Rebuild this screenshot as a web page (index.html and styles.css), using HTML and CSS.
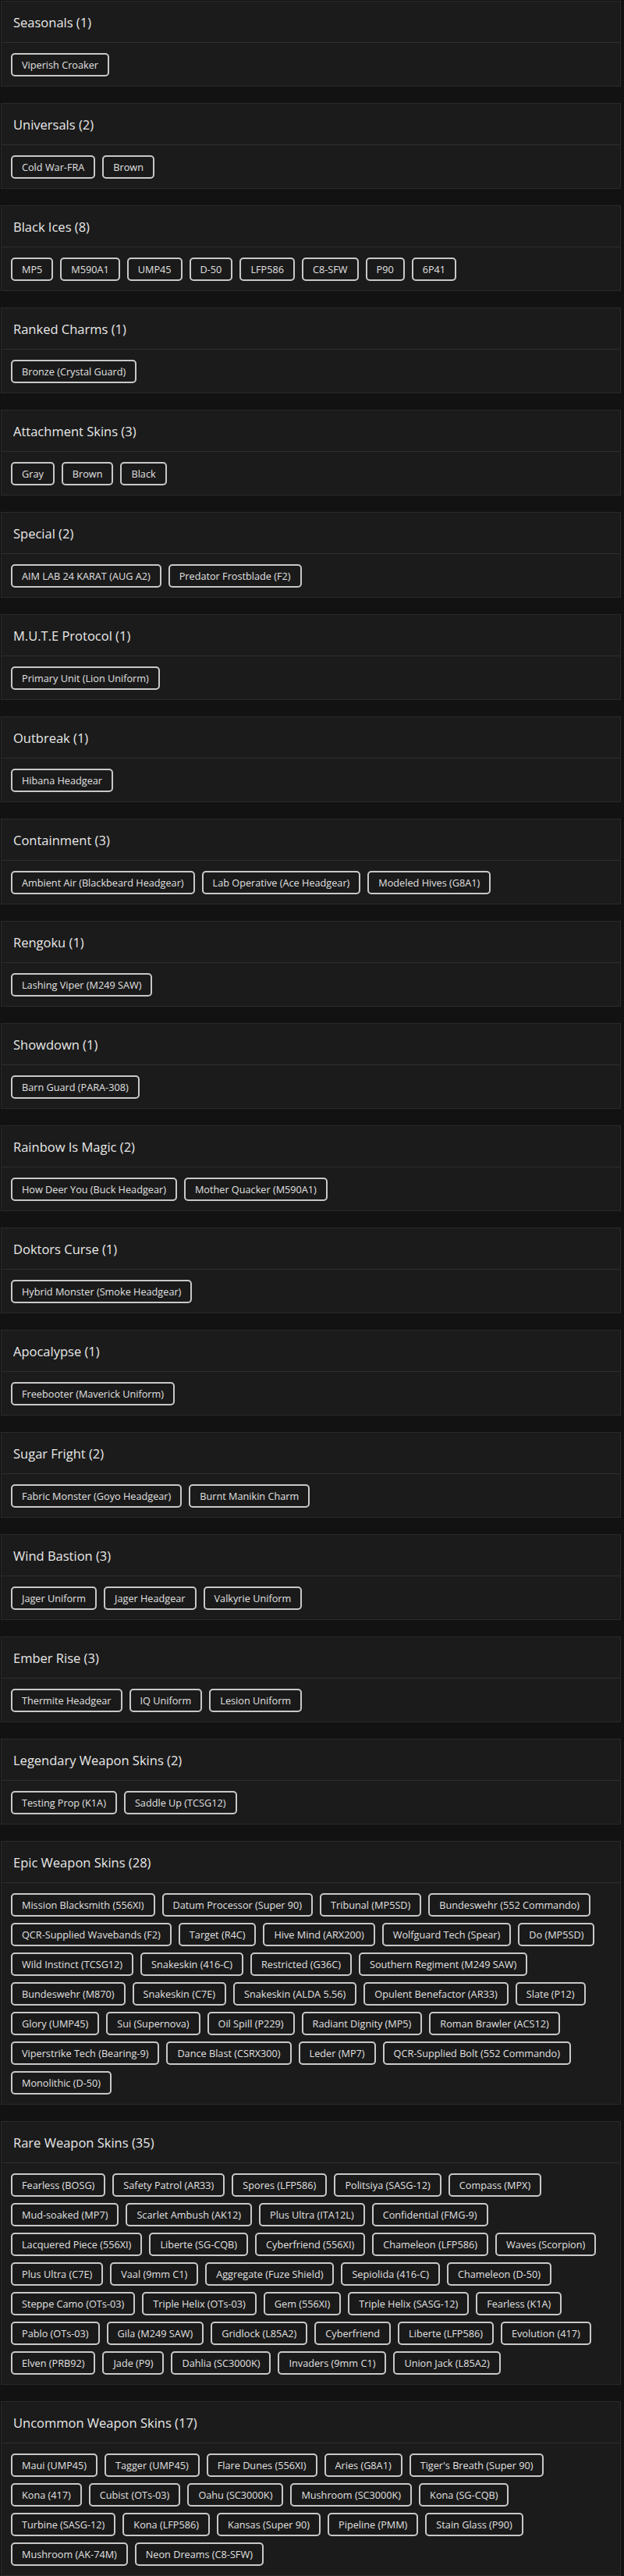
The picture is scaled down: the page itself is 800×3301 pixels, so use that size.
FILE: index.html
```html
<!DOCTYPE html>
<html lang="en">
<head>
<meta charset="utf-8">
<title>Collection</title>
<link rel="stylesheet" href="styles.css">
</head>
<body>
<main class="page">
  <section class="card"><h2 class="card-title">Seasonals (1)</h2><div class="chips">
    <span class="chip">Viperish Croaker</span>
  </div></section>
  <section class="card"><h2 class="card-title">Universals (2)</h2><div class="chips">
    <span class="chip">Cold War-FRA</span><span class="chip">Brown</span>
  </div></section>
  <section class="card"><h2 class="card-title">Black Ices (8)</h2><div class="chips">
    <span class="chip">MP5</span><span class="chip">M590A1</span><span class="chip">UMP45</span><span class="chip">D-50</span><span class="chip">LFP586</span><span class="chip">C8-SFW</span><span class="chip">P90</span><span class="chip">6P41</span>
  </div></section>
  <section class="card"><h2 class="card-title">Ranked Charms (1)</h2><div class="chips">
    <span class="chip">Bronze (Crystal Guard)</span>
  </div></section>
  <section class="card"><h2 class="card-title">Attachment Skins (3)</h2><div class="chips">
    <span class="chip">Gray</span><span class="chip">Brown</span><span class="chip">Black</span>
  </div></section>
  <section class="card"><h2 class="card-title">Special (2)</h2><div class="chips">
    <span class="chip">AIM LAB 24 KARAT (AUG A2)</span><span class="chip">Predator Frostblade (F2)</span>
  </div></section>
  <section class="card"><h2 class="card-title">M.U.T.E Protocol (1)</h2><div class="chips">
    <span class="chip">Primary Unit (Lion Uniform)</span>
  </div></section>
  <section class="card"><h2 class="card-title">Outbreak (1)</h2><div class="chips">
    <span class="chip">Hibana Headgear</span>
  </div></section>
  <section class="card"><h2 class="card-title">Containment (3)</h2><div class="chips">
    <span class="chip">Ambient Air (Blackbeard Headgear)</span><span class="chip">Lab Operative (Ace Headgear)</span><span class="chip">Modeled Hives (G8A1)</span>
  </div></section>
  <section class="card"><h2 class="card-title">Rengoku (1)</h2><div class="chips">
    <span class="chip">Lashing Viper (M249 SAW)</span>
  </div></section>
  <section class="card"><h2 class="card-title">Showdown (1)</h2><div class="chips">
    <span class="chip">Barn Guard (PARA-308)</span>
  </div></section>
  <section class="card"><h2 class="card-title">Rainbow Is Magic (2)</h2><div class="chips">
    <span class="chip">How Deer You (Buck Headgear)</span><span class="chip">Mother Quacker (M590A1)</span>
  </div></section>
  <section class="card"><h2 class="card-title">Doktors Curse (1)</h2><div class="chips">
    <span class="chip">Hybrid Monster (Smoke Headgear)</span>
  </div></section>
  <section class="card"><h2 class="card-title">Apocalypse (1)</h2><div class="chips">
    <span class="chip">Freebooter (Maverick Uniform)</span>
  </div></section>
  <section class="card"><h2 class="card-title">Sugar Fright (2)</h2><div class="chips">
    <span class="chip">Fabric Monster (Goyo Headgear)</span><span class="chip">Burnt Manikin Charm</span>
  </div></section>
  <section class="card"><h2 class="card-title">Wind Bastion (3)</h2><div class="chips">
    <span class="chip">Jager Uniform</span><span class="chip">Jager Headgear</span><span class="chip">Valkyrie Uniform</span>
  </div></section>
  <section class="card"><h2 class="card-title">Ember Rise (3)</h2><div class="chips">
    <span class="chip">Thermite Headgear</span><span class="chip">IQ Uniform</span><span class="chip">Lesion Uniform</span>
  </div></section>
  <section class="card"><h2 class="card-title">Legendary Weapon Skins (2)</h2><div class="chips">
    <span class="chip">Testing Prop (K1A)</span><span class="chip">Saddle Up (TCSG12)</span>
  </div></section>
  <section class="card"><h2 class="card-title">Epic Weapon Skins (28)</h2><div class="chips">
    <span class="chip">Mission Blacksmith (556XI)</span><span class="chip">Datum Processor (Super 90)</span><span class="chip">Tribunal (MP5SD)</span><span class="chip">Bundeswehr (552 Commando)</span>
    <span class="chip">QCR-Supplied Wavebands (F2)</span><span class="chip">Target (R4C)</span><span class="chip">Hive Mind (ARX200)</span><span class="chip">Wolfguard Tech (Spear)</span><span class="chip">Do (MP5SD)</span>
    <span class="chip">Wild Instinct (TCSG12)</span><span class="chip">Snakeskin (416-C)</span><span class="chip">Restricted (G36C)</span><span class="chip">Southern Regiment (M249 SAW)</span>
    <span class="chip">Bundeswehr (M870)</span><span class="chip">Snakeskin (C7E)</span><span class="chip">Snakeskin (ALDA 5.56)</span><span class="chip">Opulent Benefactor (AR33)</span><span class="chip">Slate (P12)</span>
    <span class="chip">Glory (UMP45)</span><span class="chip">Sui (Supernova)</span><span class="chip">Oil Spill (P229)</span><span class="chip">Radiant Dignity (MP5)</span><span class="chip">Roman Brawler (ACS12)</span>
    <span class="chip">Viperstrike Tech (Bearing-9)</span><span class="chip">Dance Blast (CSRX300)</span><span class="chip">Leder (MP7)</span><span class="chip">QCR-Supplied Bolt (552 Commando)</span>
    <span class="chip">Monolithic (D-50)</span>
  </div></section>
  <section class="card"><h2 class="card-title">Rare Weapon Skins (35)</h2><div class="chips">
    <span class="chip">Fearless (BOSG)</span><span class="chip">Safety Patrol (AR33)</span><span class="chip">Spores (LFP586)</span><span class="chip">Politsiya (SASG-12)</span><span class="chip">Compass (MPX)</span>
    <span class="chip">Mud-soaked (MP7)</span><span class="chip">Scarlet Ambush (AK12)</span><span class="chip">Plus Ultra (ITA12L)</span><span class="chip">Confidential (FMG-9)</span>
    <span class="chip">Lacquered Piece (556XI)</span><span class="chip">Liberte (SG-CQB)</span><span class="chip">Cyberfriend (556XI)</span><span class="chip">Chameleon (LFP586)</span><span class="chip">Waves (Scorpion)</span>
    <span class="chip">Plus Ultra (C7E)</span><span class="chip">Vaal (9mm C1)</span><span class="chip">Aggregate (Fuze Shield)</span><span class="chip">Sepiolida (416-C)</span><span class="chip">Chameleon (D-50)</span>
    <span class="chip">Steppe Camo (OTs-03)</span><span class="chip">Triple Helix (OTs-03)</span><span class="chip">Gem (556XI)</span><span class="chip">Triple Helix (SASG-12)</span><span class="chip">Fearless (K1A)</span>
    <span class="chip">Pablo (OTs-03)</span><span class="chip">Gila (M249 SAW)</span><span class="chip">Gridlock (L85A2)</span><span class="chip">Cyberfriend</span><span class="chip">Liberte (LFP586)</span><span class="chip">Evolution (417)</span>
    <span class="chip">Elven (PRB92)</span><span class="chip">Jade (P9)</span><span class="chip">Dahlia (SC3000K)</span><span class="chip">Invaders (9mm C1)</span><span class="chip">Union Jack (L85A2)</span>
  </div></section>
  <section class="card"><h2 class="card-title">Uncommon Weapon Skins (17)</h2><div class="chips">
    <span class="chip">Maui (UMP45)</span><span class="chip">Tagger (UMP45)</span><span class="chip">Flare Dunes (556XI)</span><span class="chip">Aries (G8A1)</span><span class="chip">Tiger's Breath (Super 90)</span>
    <span class="chip">Kona (417)</span><span class="chip">Cubist (OTs-03)</span><span class="chip">Oahu (SC3000K)</span><span class="chip">Mushroom (SC3000K)</span><span class="chip">Kona (SG-CQB)</span>
    <span class="chip">Turbine (SASG-12)</span><span class="chip">Kona (LFP586)</span><span class="chip">Kansas (Super 90)</span><span class="chip">Pipeline (PMM)</span><span class="chip">Stain Glass (P90)</span>
    <span class="chip">Mushroom (AK-74M)</span><span class="chip">Neon Dreams (C8-SFW)</span>
  </div></section>
</main>
</body>
</html>
```

FILE: styles.css
```css
* { box-sizing: border-box; }

html, body {
  margin: 0;
  padding: 0;
  background: #121212;
}

body {
  font-family: "Open Sans", "Liberation Sans", sans-serif;
  color: #e4e4e4;
}

.page {
  display: flex;
  flex-direction: column;
  gap: 21px;
  padding: 1px 4px 0 1px;
}

.card {
  background: #1b1b1b;
  border: 1px solid #2a2a2a;
}

.card-title {
  margin: 0;
  height: 53px;
  display: flex;
  align-items: center;
  padding: 0 15px;
  border-bottom: 1px solid #2e2e2e;
  font-size: 16.5px;
  font-weight: 500;
  color: #e8e8e8;
}

.chips {
  display: flex;
  flex-wrap: wrap;
  gap: 8px 9px;
  padding: 13px 12px 12px;
}

.chip {
  display: inline-flex;
  align-items: center;
  height: 30px;
  padding: 0 12px;
  border: 2px solid #c8c8c8;
  border-radius: 5px;
  background: #1a1a1a;
  font-size: 12.7px;
  color: #e0e0e0;
  white-space: nowrap;
}
```
